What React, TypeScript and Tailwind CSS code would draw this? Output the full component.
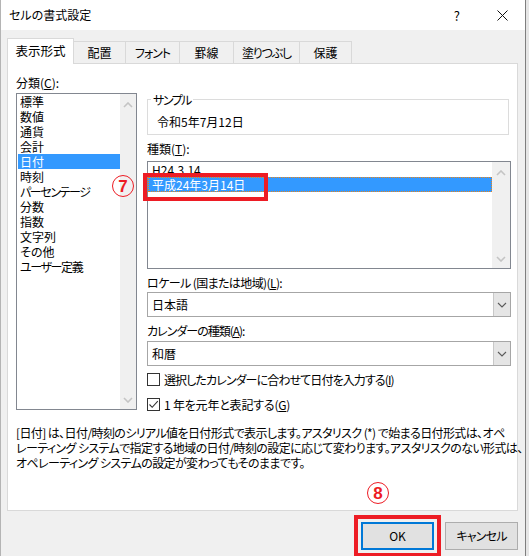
import React from "react"

const categories = [
  { label: "標準", tight: false },
  { label: "数値", tight: false },
  { label: "通貨", tight: false },
  { label: "会計", tight: false },
  { label: "日付", tight: false },
  { label: "時刻", tight: false },
  { label: "パーセンテージ", tight: true },
  { label: "分数", tight: false },
  { label: "指数", tight: false },
  { label: "文字列", tight: false },
  { label: "その他", tight: false },
  { label: "ユーザー定義", tight: true },
]

const tabs = [
  { label: "配置", cls: "w-[52px]" },
  { label: "フォント", cls: "w-[54px] tracking-[-1px]" },
  { label: "罫線", cls: "w-[54px]" },
  { label: "塗りつぶし", cls: "w-[66px] tracking-[-1.2px]" },
  { label: "保護", cls: "w-[52px]" },
]

const ArrowUp = () => (
  <svg width="10" height="6" viewBox="0 0 10 6">
    <polyline points="1,5 5,1 9,5" fill="none" stroke="#c4c4c4" strokeWidth="1.6" />
  </svg>
)

const ArrowDown = () => (
  <svg width="10" height="6" viewBox="0 0 10 6">
    <polyline points="1,1 5,5 9,1" fill="none" stroke="#c4c4c4" strokeWidth="1.6" />
  </svg>
)

const Chevron = () => (
  <svg width="10" height="6" viewBox="0 0 10 6">
    <polyline points="1,1 5,5 9,1" fill="none" stroke="#5a5a5a" strokeWidth="1.1" />
  </svg>
)

// red circled step number drawn over the dialog
const StepMark = ({ n, className }: { n: string; className: string }) => (
  <span
    className={`absolute w-[22px] h-[22px] rounded-full border border-[#ed1c24] flex items-center justify-center text-[#ed1c24] text-[17px] font-bold leading-none font-['Liberation_Sans',sans-serif] ${className}`}
  >
    {n}
  </span>
)

const Combo = ({ value }: { value: string }) => (
  <div className="h-[25px] border border-[#a6a6a6] bg-white flex">
    <div className="flex-1 pl-[4px] leading-[23px]">{value}</div>
    <div className="w-[17px] bg-[#e5e5e5] border-l border-[#c8c8c8] flex items-center justify-center">
      <Chevron />
    </div>
  </div>
)

export default function App() {
  return (
    <div className="w-[529px] h-[556px] flex overflow-hidden bg-[#e9e9e9] text-[12px] text-black font-['Noto_Sans_CJK_JP','Noto_Sans',sans-serif] [font-feature-settings:'palt']">
      <div className="w-[526px] h-full flex flex-col bg-[#f0f0f0] border-l border-l-[#b4b4b4] border-r border-r-[#7f7f7f]">
        {/* title bar */}
        <div className="h-[30px] shrink-0 bg-white flex items-center">
          <div className="flex-1 pl-[8px] text-[12px]">セルの書式設定</div>
          <div className="text-[13px] leading-none mr-[37px]">?</div>
          <svg width="11" height="11" viewBox="0 0 11 11" className="mr-[17px]">
            <path d="M0.5 0.5 L10.5 10.5 M10.5 0.5 L0.5 10.5" stroke="#111" strokeWidth="1" />
          </svg>
        </div>

        <div className="flex-1 flex flex-col pt-[8px] pl-[6px] pr-[7px]">
          {/* tabs */}
          <div className="flex items-end h-[25px]">
            <div className="relative z-10 w-[67px] h-[26px] -mb-px bg-white border-t border-l border-r border-[#d9d9d9] flex items-center justify-center pb-[1px] text-[12.5px]">
              表示形式
            </div>
            {tabs.map((t) => (
              <div
                key={t.label}
                className={`${t.cls} h-[22px] bg-[#f0f0f0] border-t border-r border-[#d9d9d9] flex items-center justify-center`}
              >
                {t.label}
              </div>
            ))}
          </div>

          {/* tab panel */}
          <div className="h-[448px] bg-white border border-[#d9d9d9] pt-[11px] pl-[8px]">
            <div className="flex items-start gap-[10px]">
              {/* category column */}
              <div className="w-[121px]">
                <div className="leading-[15px]">
                  分類(<span className="underline">C</span>):
                </div>
                <div className="mt-[3px] h-[317px] border border-[#828790] flex">
                  <div className="flex-1">
                    {categories.map((c) => (
                      <div
                        key={c.label}
                        className={`h-[15px] leading-[15px] ml-[1px] pl-[2px] ${c.label === "日付" ? "bg-[#3399ff] text-white" : ""} ${c.tight ? "tracking-[-1.4px]" : ""}`}
                      >
                        {c.label}
                      </div>
                    ))}
                  </div>
                  <div className="w-[16px] bg-[#f0f0f0] flex flex-col justify-between items-center pt-[8px] pb-[6px]">
                    <ArrowUp />
                    <ArrowDown />
                  </div>
                </div>
              </div>

              {/* format column */}
              <div className="w-[364px] mt-[17px]">
                <fieldset className="w-[362px] border border-[#dcdcdc] pl-[9px] pt-[7px] pb-[5px]">
                  <legend className="ml-[-6px] px-[2px] leading-[15px] tracking-[-1.5px]">サンプル</legend>
                  <div className="leading-[15px]">令和5年7月12日</div>
                </fieldset>

                <div className="mt-[6px] leading-[15px]">
                  種類(<span className="underline">T</span>):
                </div>
                <div className="relative mt-[5px] h-[108px] border border-[#828790] flex">
                  <div className="flex-1 overflow-hidden">
                    <div className="h-[15px] leading-[15px] pl-[4px]">H24.3.14</div>
                    <div className="h-[15px] leading-[13px] pl-[3px] bg-[#3399ff] text-white border border-dotted border-[#e8841a]">
                      平成24年3月14日
                    </div>
                  </div>
                  <div className="w-[18px] bg-[#f0f0f0] flex flex-col justify-between items-center pt-[8px] pb-[6px]">
                    <ArrowUp />
                    <ArrowDown />
                  </div>
                  <div className="absolute left-[-5px] top-[11px] w-[125px] h-[28px] border-4 border-[#ed1c24]" />
                  <StepMark n="7" className="left-[-36px] top-[13px]" />
                </div>

                <div className="mt-[6px] leading-[15px] tracking-[-0.6px]">
                  ロケール (国または地域)(<span className="underline">L</span>):
                </div>
                <div className="mt-[2px]">
                  <Combo value="日本語" />
                </div>

                <div className="mt-[6px] leading-[15px] tracking-[-1px]">
                  カレンダーの種類(<span className="underline">A</span>):
                </div>
                <div className="mt-[3px]">
                  <Combo value="和暦" />
                </div>

                <div className="mt-[6px] flex items-center gap-[4px] h-[15px]">
                  <span className="w-[13px] h-[13px] border border-[#333] bg-white" />
                  <span className="leading-[15px] tracking-[-0.9px]">
                    選択したカレンダーに合わせて日付を入力する(<span className="underline">I</span>)
                  </span>
                </div>
                <div className="mt-[10px] flex items-center gap-[4px] h-[15px]">
                  <span className="w-[13px] h-[13px] border border-[#333] bg-white flex items-center justify-center">
                    <svg width="11" height="11" viewBox="0 0 11 11">
                      <polyline points="1.5,5.5 4.2,8.3 9.8,2.2" fill="none" stroke="#333" strokeWidth="1.1" />
                    </svg>
                  </span>
                  <span className="leading-[15px] tracking-[-0.2px]">
                    1 年を元年と表記する(<span className="underline">G</span>)
                  </span>
                </div>
              </div>
            </div>

            <p className="mt-[13px] leading-[15px] whitespace-nowrap tracking-[-0.6px]">
              [日付] は、日付/時刻のシリアル値を日付形式で表示します。アスタリスク (*) で始まる日付形式は、オペ
              <br />
              レーティング システムで指定する地域の日付/時刻の設定に応じて変わります。アスタリスクのない形式は、
              <br />
              オペレーティング システムの設定が変わってもそのままです。
            </p>
          </div>

          {/* buttons */}
          <div className="mt-[11px] flex justify-end gap-[11px]">
            <div className="relative">
              <button className="w-[73px] h-[28px] bg-[#e1e1e1] border-2 border-[#0078d7] leading-none">OK</button>
              <div className="absolute left-[-7px] top-[-7px] w-[87px] h-[42px] border-4 border-[#ed1c24]" />
              <StepMark n="8" className="left-[6px] top-[-40px]" />
            </div>
            <button className="w-[73px] h-[28px] bg-[#e1e1e1] border border-[#adadad] leading-none tracking-[-0.8px]">
              キャンセル
            </button>
          </div>
        </div>
      </div>
      <div className="flex-1 bg-[#e6e6e6]" />
    </div>
  )
}
